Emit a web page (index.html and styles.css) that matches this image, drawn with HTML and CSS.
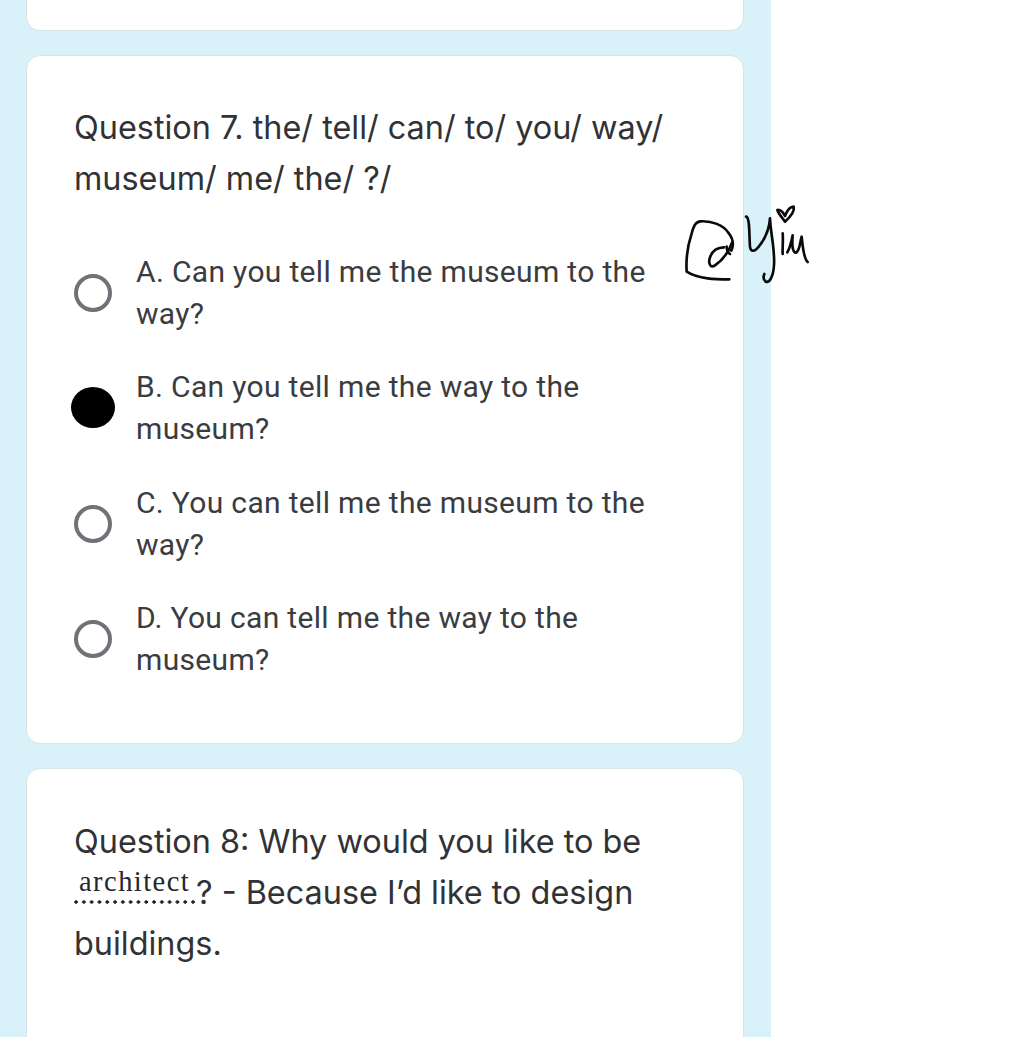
FILE: index.html
```html
<!DOCTYPE html>
<html lang="en">
<head>
<meta charset="utf-8">
<title>Quiz</title>
<link rel="stylesheet" href="styles.css">
</head>
<body>
<main class="column">
  <section class="card card-top"></section>
  <section class="card card-q7">
    <h2 class="question">Question 7. the/ tell/ can/ to/ you/ way/ museum/ me/ the/ ?/</h2>
    <div class="options">
      <div class="option"><span class="radio"></span><p class="label">A. Can you tell me the museum to the way?</p></div>
      <div class="option"><span class="radio radio-filled"></span><p class="label">B. Can you tell me the way to the museum?</p></div>
      <div class="option"><span class="radio"></span><p class="label">C. You can tell me the museum to the way?</p></div>
      <div class="option"><span class="radio"></span><p class="label">D. You can tell me the way to the museum?</p></div>
    </div>
  </section>
  <section class="card card-q8">
    <h2 class="question">Question 8: Why would you like to be <span class="blank">architect</span>? - Because I’d like to design buildings.</h2>
  </section>
</main>
<svg class="signature" viewBox="0 0 450 330" width="150" height="110" aria-hidden="true">
  <path d="M178 268 C140 268 85 268 50 245 C48 215 52 170 65 130 C72 105 78 95 92 94 C125 92 160 105 175 128 C192 150 192 165 184 182"/>
  <path d="M162 172 C140 172 125 185 119 205 C114 225 124 234 135 226 C155 212 175 190 186 158"/>
  <path d="M170 170 C170 180 174 188 180 192"/>
  <path d="M228 80 C240 82 237 130 240 170 C242 188 255 186 270 165 C285 145 298 115 300 85 C302 130 315 180 312 225 C310 260 298 280 287 275 C280 270 280 260 283 252"/>
  <path d="M345 95 C338 85 326 72 322 60 C334 58 342 72 345 78 C350 65 358 50 371 50 C374 62 364 78 345 95 Z"/>
  <path d="M338 130 C340 150 337 175 338 192"/>
  <path d="M352 187 C360 175 364 155 368 136 C366 160 366 188 378 188 C390 182 390 155 395 140 C398 165 400 205 413 216"/>
</svg>
</body>
</html>
```

FILE: styles.css
```css
html, body {
  margin: 0;
  height: 1037px;
  overflow: hidden;
  background: #fff;
}
body {
  position: relative;
  font-family: Roboto, "Liberation Sans", sans-serif;
}
.column {
  box-sizing: border-box;
  width: 771px;
  height: 1037px;
  padding: 0 27px 0 26px;
  background: #d9f2f9;
  display: flex;
  flex-direction: column;
  gap: 24px;
  overflow: hidden;
}
.card {
  flex: none;
  background: #fff;
  border: 1px solid #d8e3e7;
  border-radius: 14px;
  box-sizing: border-box;
}
.card-top {
  height: 31px;
  border-top: 0;
  border-top-left-radius: 0;
  border-top-right-radius: 0;
}
.card-q7 {
  height: 689px;
  padding: 46px 47px 0;
}
.card-q8 {
  height: 400px;
  padding: 47px 47px 0;
}
.question {
  margin: 0;
  font-family: Inter, Roboto, sans-serif;
  font-size: 32.4px;
  font-weight: 400;
  line-height: 51px;
  color: #303235;
}
.options {
  margin-top: 47px;
  display: flex;
  flex-direction: column;
  gap: 31.35px;
}
.option {
  display: flex;
  align-items: center;
  gap: 24px;
}
.radio {
  flex: none;
  box-sizing: border-box;
  width: 38px;
  height: 38px;
  border: 4px solid #6f7377;
  border-radius: 50%;
}
.radio-filled {
  width: 44px;
  height: 41px;
  margin: 0 -3px 1px;
  border: 0;
  background: #000;
}
.label {
  margin: 0;
  flex: 1;
  font-size: 30px;
  letter-spacing: 0.33px;
  line-height: 42px;
  color: #3a3c3f;
}
.blank {
  display: inline-block;
  box-sizing: border-box;
  width: 122px;
  height: 37px;
  padding: 0 4px 7px 0;
  vertical-align: 13px;
  font-family: "Liberation Serif", serif;
  font-size: 28.5px;
  letter-spacing: 1.45px;
  line-height: 30px;
  text-indent: 5px;
  color: #23272e;
  background-image: radial-gradient(circle at 2px 2px, #222 1.5px, transparent 1.8px);
  background-size: 7.8px 4px;
  background-repeat: repeat-x;
  background-position: left bottom;
  background-clip: padding-box;
  background-origin: padding-box;
  white-space: nowrap;
}
.signature {
  position: absolute;
  left: 670px;
  top: 190px;
  fill: none;
  stroke: #0a0a0a;
  stroke-width: 8;
  stroke-linecap: round;
  stroke-linejoin: round;
}
```
